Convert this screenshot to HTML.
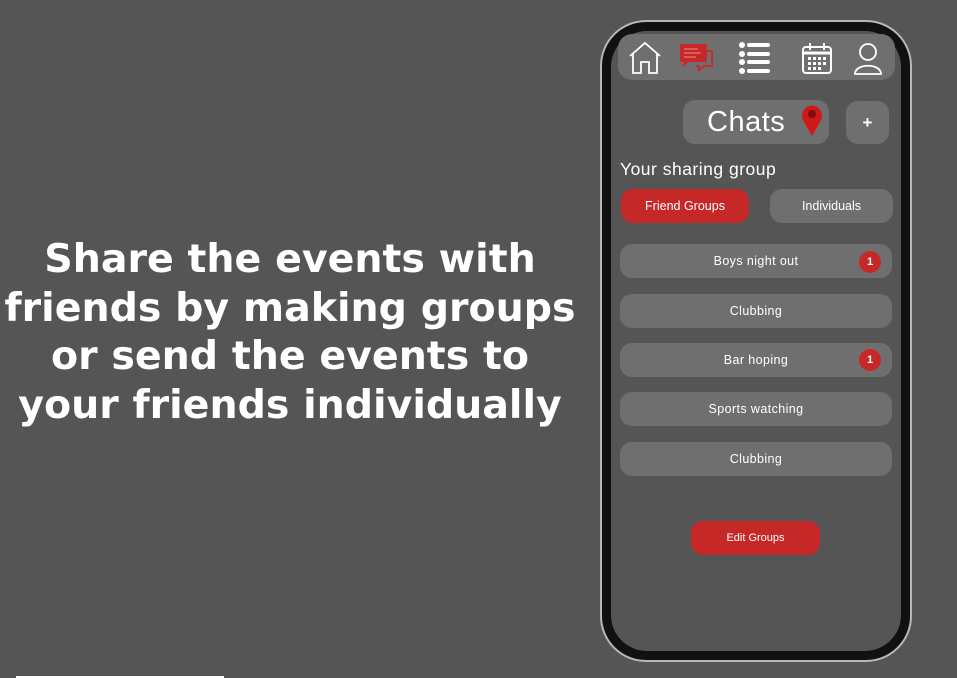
<!DOCTYPE html>
<html><head><meta charset="utf-8"><style>
*{margin:0;padding:0;box-sizing:border-box}
body{width:957px;height:678px;background:#555555;position:relative;overflow:hidden;font-family:"DejaVu Sans","Liberation Sans",sans-serif}
.hero{position:absolute;left:-10px;width:600px;top:235px;text-align:center;color:#fff;font-weight:bold;font-size:39.5px;line-height:48.5px}
.phone{position:absolute;left:600px;top:20px;width:312px;height:642px;border-radius:46px;background:#111;border:2px solid #b8b8b8}
.screen{position:absolute;left:611px;top:31px;width:290px;height:620px;border-radius:36px;background:#555}
.box{position:absolute;background:#6f6f6f;color:#fff;border-radius:12px;display:flex;align-items:center;justify-content:center;font-family:"Liberation Sans",sans-serif}
.red{background:#c62828}
.row{left:620px;width:272px;height:34px;font-size:12.5px;letter-spacing:.4px}
.badge{position:absolute;left:859px;width:22px;height:22px;border-radius:50%;background:#c62828;color:#fff;font-size:11px;font-weight:bold;display:flex;align-items:center;justify-content:center;font-family:"Liberation Sans",sans-serif}
</style></head><body>
<div class="hero">Share the events with<br>friends by making groups<br>or send the events to<br>your friends individually</div>
<div class="phone"></div>
<div class="screen"></div>
<div class="box" style="left:618px;top:34px;width:277px;height:46px;border-radius:14px"></div>
<svg style="position:absolute;left:618px;top:34px" width="277" height="46" viewBox="0 0 277 46" fill="none">
<path d="M12 22 L27 9 L42 22 M15 20 V39 H23 V28 H31 V39 H39 V20" stroke="#fff" stroke-width="1.8"/>
<path d="M78 17 h16 v15 h-8 l-5 4 v-4 h-3" stroke="#c62828" stroke-width="1.8"/>
<rect x="62" y="10" width="27" height="18" rx="2" fill="#c62828"/><path d="M66 27 L65 33 L72 27Z" fill="#c62828"/>
<path d="M66 15h14M66 19h17M66 23h12" stroke="#e06a6a" stroke-width="1.4"/>
<g fill="#fff"><circle cx="124" cy="11" r="3"/><circle cx="124" cy="20" r="3"/><circle cx="124" cy="28" r="3"/><circle cx="124" cy="37" r="3"/>
<rect x="129" y="9" width="23" height="4" rx="2"/><rect x="129" y="18" width="23" height="4" rx="2"/><rect x="129" y="26" width="23" height="4" rx="2"/><rect x="129" y="35" width="23" height="4" rx="2"/></g>
<rect x="185" y="13" width="28" height="26" rx="3" stroke="#fff" stroke-width="2"/><path d="M185 19h28" stroke="#fff" stroke-width="3"/>
<path d="M192 9v7M206 9v7" stroke="#fff" stroke-width="2"/>
<g fill="#fff"><rect x="190" y="23" width="3" height="3"/><rect x="195" y="23" width="3" height="3"/><rect x="200" y="23" width="3" height="3"/><rect x="205" y="23" width="3" height="3"/><rect x="190" y="28" width="3" height="3"/><rect x="195" y="28" width="3" height="3"/><rect x="200" y="28" width="3" height="3"/><rect x="205" y="28" width="3" height="3"/><rect x="190" y="33" width="3" height="3"/><rect x="195" y="33" width="3" height="3"/><rect x="200" y="33" width="3" height="3"/></g>
<circle cx="250" cy="18" r="8" stroke="#fff" stroke-width="1.8"/><path d="M237 40 C237 29 263 29 263 40 Z" stroke="#fff" stroke-width="1.8"/>
</svg>
<div class="box" style="left:683px;top:100px;width:146px;height:44px;font-size:29px;justify-content:flex-start;padding-left:24px;letter-spacing:.5px">Chats</div>
<svg style="position:absolute;left:800px;top:103px" width="24" height="34" viewBox="0 0 24 34"><path d="M12 33 L3 17 A10 10 0 1 1 21 17 Z" fill="#d01818"/><circle cx="12" cy="11" r="4" fill="#7a1010"/></svg>
<div class="box" style="left:846px;top:101px;width:43px;height:43px;font-size:17px;font-weight:bold">+</div>
<div style="position:absolute;left:620px;top:159px;color:#fff;font-size:17.5px;font-family:'Liberation Sans',sans-serif;letter-spacing:.5px">Your sharing group</div>
<div class="box red" style="left:621px;top:189px;width:128px;height:34px;font-size:12.5px">Friend Groups</div>
<div class="box" style="left:770px;top:189px;width:123px;height:34px;font-size:12.5px">Individuals</div>
<div class="box row" style="top:244px">Boys night out</div><div class="badge" style="top:251px">1</div>
<div class="box row" style="top:294px">Clubbing</div>
<div class="box row" style="top:343px">Bar hoping</div><div class="badge" style="top:349px">1</div>
<div class="box row" style="top:392px">Sports watching</div>
<div class="box row" style="top:442px">Clubbing</div>
<div class="box red" style="left:691px;top:521px;width:129px;height:34px;font-size:11px">Edit Groups</div>
<div style="position:absolute;left:16px;top:676px;width:208px;height:2px;background:#fff"></div>
</body></html>
